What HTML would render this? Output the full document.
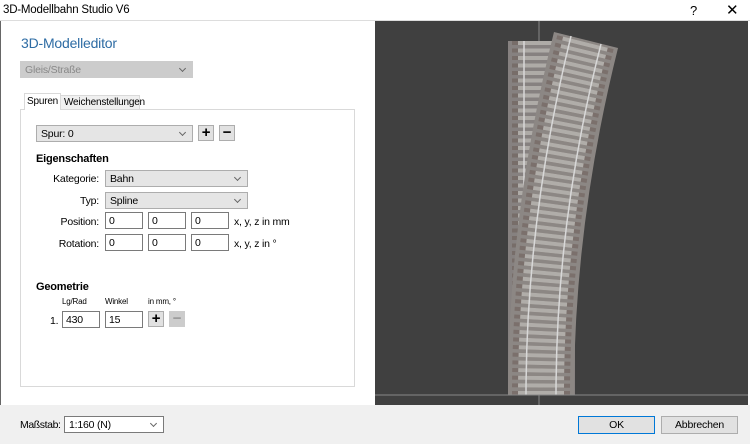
<!DOCTYPE html>
<html><head><meta charset="utf-8"><style>
*{box-sizing:border-box;margin:0;padding:0}
body{width:750px;height:444px;position:relative;overflow:hidden;background:#fff;font-family:"Liberation Sans",sans-serif;font-size:10.5px;color:#000;letter-spacing:-0.2px}
.a{position:absolute;white-space:nowrap}
.dd{position:absolute;background:#e5e5e5;border:1px solid #adadad;height:17px;padding:2px 0 0 4px;font-size:10.5px}
.dd:after{content:"";position:absolute;right:7px;top:4px;width:4px;height:4px;border-right:1px solid #666;border-bottom:1px solid #666;transform:rotate(45deg)}
.in{position:absolute;background:#fff;border:1px solid #7a7a7a;height:17px;padding:2px 0 0 3px}
.bt{position:absolute;width:16px;height:16px;background:#e1e1e1;border:1px solid #adadad;text-align:center;font-size:15px;font-weight:bold;line-height:13px}
.lb{position:absolute;text-align:right;width:80px}
</style></head><body>
<div class="a" style="left:0;top:0;width:750px;height:21px;background:#fff;border-bottom:1px solid #ddd"></div>
<div class="a" style="left:3px;top:4px;font-size:11.5px">3D-Modellbahn Studio V6</div>
<div class="a" style="left:690px;top:3px;font-size:13px">?</div>
<div class="a" style="left:726px;top:1px;font-size:15px">✕</div>
<div class="a" style="left:0;top:21px;width:1px;height:423px;background:#666"></div>
<div class="a" style="left:21px;top:35px;font-size:14px;color:#2e6ca4">3D-Modelleditor</div>
<div class="dd" style="left:20px;top:61px;width:173px;background:#ccc;border-color:#ccc;color:#888">Gleis/Straße</div>
<div class="a" style="left:24px;top:93px;width:37px;height:17px;background:#fff;border:1px solid #d9d9d9;border-bottom:none;padding:2px 0 0 2px;z-index:2;font-size:10px">Spuren</div>
<div class="a" style="left:60px;top:95px;width:80px;height:15px;background:#f0f0f0;border:1px solid #d9d9d9;padding:1px 0 0 3px;font-size:10px">Weichenstellungen</div>
<div class="a" style="left:20px;top:109px;width:335px;height:278px;border:1px solid #d9d9d9;background:#fff"></div>
<div class="dd" style="left:36px;top:125px;width:157px">Spur: 0</div>
<div class="bt" style="left:198px;top:125px">+</div>
<div class="bt" style="left:219px;top:125px">−</div>
<div class="a" style="left:36px;top:153px;font-weight:bold;font-size:11px">Eigenschaften</div>
<div class="lb" style="left:19px;top:173px">Kategorie:</div>
<div class="dd" style="left:105px;top:170px;width:143px">Bahn</div>
<div class="lb" style="left:19px;top:195px">Typ:</div>
<div class="dd" style="left:105px;top:192px;width:143px">Spline</div>
<div class="lb" style="left:19px;top:216px">Position:</div>
<div class="in" style="left:105px;top:212px;width:38px">0</div>
<div class="in" style="left:148px;top:212px;width:38px">0</div>
<div class="in" style="left:191px;top:212px;width:38px">0</div>
<div class="a" style="left:234px;top:216px">x, y, z in mm</div>
<div class="lb" style="left:19px;top:238px">Rotation:</div>
<div class="in" style="left:105px;top:234px;width:38px">0</div>
<div class="in" style="left:148px;top:234px;width:38px">0</div>
<div class="in" style="left:191px;top:234px;width:38px">0</div>
<div class="a" style="left:234px;top:238px">x, y, z in °</div>
<div class="a" style="left:36px;top:281px;font-weight:bold;font-size:11px">Geometrie</div>
<div class="a" style="left:62px;top:297px;font-size:8px">Lg/Rad</div>
<div class="a" style="left:105px;top:297px;font-size:8px">Winkel</div>
<div class="a" style="left:148px;top:297px;font-size:8px">in mm, °</div>
<div class="a" style="left:50px;top:315px">1.</div>
<div class="in" style="left:62px;top:311px;width:38px">430</div>
<div class="in" style="left:105px;top:311px;width:38px">15</div>
<div class="bt" style="left:148px;top:311px">+</div>
<div class="bt" style="left:169px;top:311px;background:#ccc;border-color:#ccc;color:#999">−</div>
<div class="a" style="left:375px;top:21px;width:373px;height:384px;background:#404040;overflow:hidden">
<svg width="373" height="384" viewBox="375 21 373 384">
<line x1="539" y1="21" x2="539" y2="405" stroke="#888" stroke-width="1"/>
<rect x="508" y="41" width="67" height="354" fill="#868180"/>
<line x1="541" y1="41" x2="541" y2="395" stroke="#6a5a54" stroke-width="58" stroke-dasharray="4 3.5" opacity=".5"/>
<line x1="541" y1="41" x2="541" y2="395" stroke="#aeaba7" stroke-width="46" stroke-dasharray="4 3.5"/>
<line x1="524" y1="41" x2="524" y2="395" stroke="#d8d8d8" stroke-width="1.5"/>
<line x1="554" y1="41" x2="554" y2="395" stroke="#d8d8d8" stroke-width="1.5"/>
<path d="M541 395 Q541 220 586 40" fill="none" stroke="#8c8784" stroke-width="66"/>
<path d="M541 395 Q541 220 586 40" fill="none" stroke="#6a5a54" stroke-width="58" stroke-dasharray="4 3.5" opacity=".5"/>
<path d="M541 395 Q541 220 586 40" fill="none" stroke="#b0ada9" stroke-width="46" stroke-dasharray="4 3.5"/>
<path d="M526 395 Q526 220 571 36" fill="none" stroke="#d8d8d8" stroke-width="1.5"/>
<path d="M556 395 Q556 220 601 44" fill="none" stroke="#d8d8d8" stroke-width="1.5"/>
<rect x="500" y="395" width="90" height="10" fill="#404040"/>
<line x1="375" y1="395" x2="748" y2="395" stroke="#888" stroke-width="1"/>
<line x1="539" y1="395" x2="539" y2="405" stroke="#888"/>
</svg></div>
<div class="a" style="left:0;top:405px;width:750px;height:39px;background:#f0f0f0"></div>
<div class="a" style="left:20px;top:419px;letter-spacing:-0.4px">Maßstab:</div>
<div class="dd" style="left:64px;top:416px;width:100px;background:#fff;border-color:#7a7a7a">1:160 (N)</div>
<div class="a" style="left:578px;top:416px;width:77px;height:18px;background:#e1e1e1;border:1px solid #0078d7;text-align:center;padding-top:2px">OK</div>
<div class="a" style="left:661px;top:416px;width:77px;height:18px;background:#e1e1e1;border:1px solid #adadad;text-align:center;padding-top:2px">Abbrechen</div>
</body></html>
